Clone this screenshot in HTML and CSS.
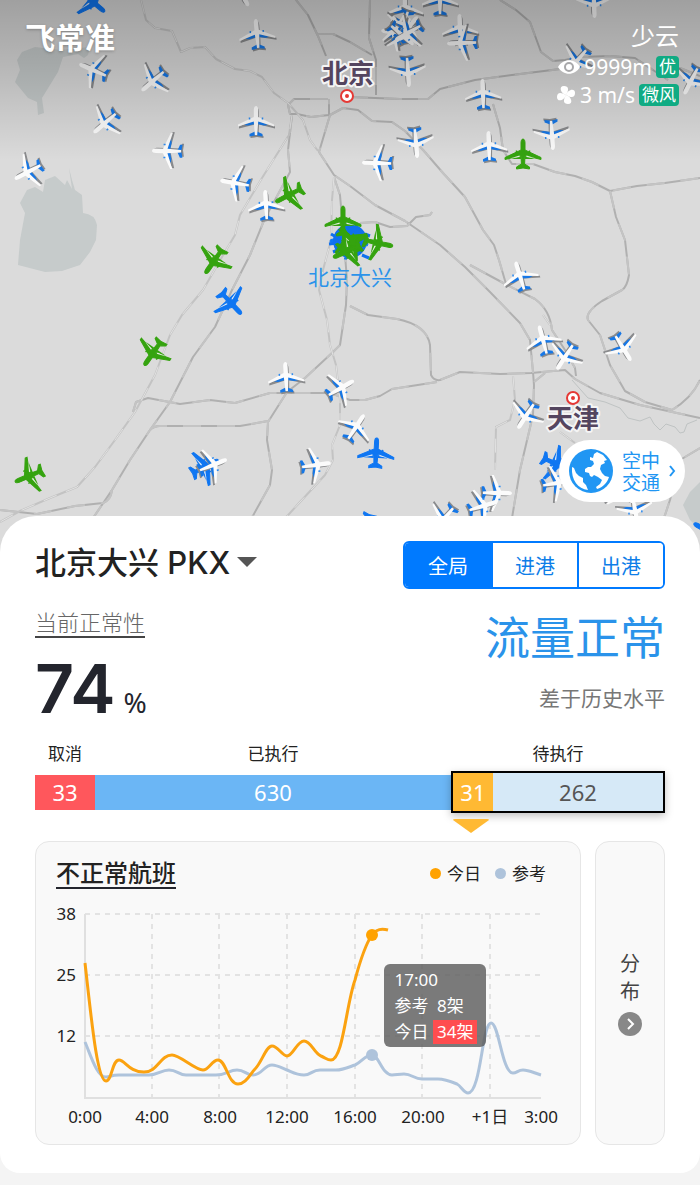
FILE: index.html
```
<!DOCTYPE html>
<html lang="zh-CN">
<head>
    <meta charset="UTF-8">
    <meta name="viewport" content="width=device-width, initial-scale=1.0">
    <title>飞常准 - 北京大兴 PKX</title>
    <link rel="stylesheet" href="styles.css">
</head>
<body>
    <!-- Map -->
    <section class="map">
        <svg class="map-canvas" viewBox="0 0 700 552" preserveAspectRatio="xMidYMin slice" role="img" aria-label="航班地图">
            <defs>
                <linearGradient id="shade" x1="0" y1="0" x2="0" y2="1">
                    <stop offset="0" stop-color="#000" stop-opacity="0.27"/>
                    <stop offset="0.4" stop-color="#000" stop-opacity="0.17"/>
                    <stop offset="1" stop-color="#000" stop-opacity="0"/>
                </linearGradient>
                <!-- All planes point north, 28 long and 36 wide -->
                <path id="body" d="M0 -15C1.4 -15 2 -13 2 -11V-4L18 3.500V5.500L2 1.500L1.600 10L6.500 13V15L0 14L-6.500 15V13L-1.600 10L-2 1.500L-18 5.500V3.500L-2 -4V-11C-2 -13 -1.400 -15 0 -15Z"/>
                <g id="jet">
                    <use href="#body" x="1" y="2" fill="#8a8b8d"/>
                    <path d="M1 -1L12 4L8 4.500L1 3ZM-1 -1L-12 4L-8 4.500L-1 3ZM1 10.500L6.500 13V15.500L1 14.500ZM-1 10.500L-6.500 13V15.500L-1 14.500Z" fill="#1677e6"/>
                    <path d="M0 -15C1.4 -15 2.2 -13 2.2 -11V-4L18 3.500V5.500L2.200 0.500L1.200 14H-1.200L-2.200 0.500L-18 5.500V3.500L-2.200 -4V-11C-2.200 -13 -1.400 -15 0 -15Z" fill="#fbfbfb"/>
                    <path d="M6.500 -3.500V-1.500M-6.500 -3.500V-1.500" stroke="#2d8bf0" stroke-width="1.500"/>
                </g>
                <g id="jet-green">
                    <use href="#body" fill="#35a30f" stroke="#35a30f"/>
                    <path d="M2 2L12 5L2 5ZM-2 2L-12 5L-2 5Z" fill="#35a30f"/>
                    <path d="M3.500 1.500L12 4.300L3.500 3ZM-3.500 1.500L-12 4.300L-3.500 3Z" fill="#e6f2e0"/>
                    <path d="M6.500 -3.500V-1M-6.500 -3.500V-1" stroke="#35a30f" stroke-width="1.500"/>
                </g>
                <g id="jet-blue">
                    <use href="#body" fill="#0f76f2" stroke="#0f76f2"/>
                    <path d="M2 2L12 5L2 5ZM-2 2L-12 5L-2 5Z" fill="#0f76f2"/>
                    <path d="M3.500 1.500L12 4.300L3.500 3ZM-3.500 1.500L-12 4.300L-3.500 3Z" fill="#dfebf8"/>
                    <path d="M6.500 -3.500V-1M-6.500 -3.500V-1" stroke="#0f76f2" stroke-width="1.500"/>
                </g>
                <g id="roads" fill="none" stroke-linejoin="round">
                    <path d="M296 0L308 15L318 36L326 56M318 34H333L350 42L372 55M370 0L369 38L376 60V95"/>
                    <path d="M328 99H294L288 105L290 114H297L311 117L329 115V99"/>
                    <path d="M330 115L343 108L358 110L372 121L392 122L405 131L424 151L443 173L465 197L483 230L494 245L499 260L506 284"/>
                    <path d="M350 97L400 99H428L440 89L475 80L520 74L560 69M500 0L516 10L530 22L541 52L553 61L565 60L580 57L610 56L635 58L668 80M680 68L700 76"/>
                    <path d="M493 104L500 128L503 150L512 164H533L555 172L575 176L592 182L610 191L637 186L665 183L700 178"/>
                    <path d="M610 191L616 217L625 240L629 275Q627 287 622 290L602 301Q585 312 588 320L600 335L610 365L625 391L645 402L672 410Q692 398 700 380"/>
                    <path d="M330 115L319 152L334 175L350 186L375 205L405 221L440 245L465 267L490 292L520 323L530 340L533 372L534 385L533 415L520 470L510 530"/>
                    <path d="M334 177L340 195L343 230L347 280L346 305L340 345L333 352L305 378L287 392L268 422L267 440L272 470L270 485L245 530"/>
                    <path d="M350 306L368 315L397 319Q427 325 430 345L431 375Q434 381 440 380L460 372L500 374L531 373L565 370L575 379L600 393L640 405L700 418"/>
                    <path d="M133 412L136 402L148 398L180 404L210 400L235 403L270 393H330L350 400H365L380 396L392 389L437 382"/>
                    <path d="M292 115L288 150L290 172L275 200L265 218L250 255L232 290L215 327L193 357L170 402L150 430L130 460L112 490L85 530"/>
                    <path d="M150 430Q154 426 160 426H240L268 421M0 510L37 514L75 506L103 503Q111 500 112 490"/>
                    <path d="M360 223L375 222L390 227L407 226L416 217L430 215L432 212M470 265L507 285L535 299Q550 310 552 330L565 350L575 368L576 376M534 382L545 373"/>
                    <path d="M700 448L680 460L670 500L660 530"/>
                </g>
                <g id="rails" fill="none" stroke-linejoin="round">
                    <path d="M141 0L146 20L155 28L172 31L181 52L190 48L205 47L216 59L235 69L250 71L262 77L274 93L288 103L303 120L310 140L318 151"/>
                    <path d="M292 115L289 135L262 178L240 215L235 235L222 257L203 290L182 315L170 335L155 375L135 412L115 440L95 467L77 487L50 498L20 511L0 522"/>
                    <path d="M334 177L332 200L331 240L323 270L319 290L327 320L330 345L336 365L340 400V425L332 445L333 460L325 475L300 502L280 524"/>
                    <path d="M513 376L515 400L510 420L496 427L495 470M543 315L550 325M560 432L575 443"/>
                </g>
            </defs>

            <rect width="700" height="552" fill="#dbdbdb"/>
            <g class="water">
                <path d="M22 52L35 47L60 50L90 47L88 55L84 58L78 54L63 57L58 72L50 85L42 98L44 113L38 115L37 102L28 98L15 82L20 70L17 60Z"/>
                <path d="M45 180L55 176L65 185L67 180L72 189L69 168L72 180L75 190L82 195L83 213Q95 214 97 225L96 240L90 252L80 265L62 271L45 272L18 265L20 240L25 213L20 203L27 190L35 187L43 192Z"/>
                <path d="M700 482L690 492L683 505L690 520L700 530Z"/>
            </g>
            <use href="#roads" class="road"/>
            <use href="#roads" class="road-dash"/>
            <use href="#rails" class="rail"/>
            <use href="#rails" class="rail-dash"/>
            <path class="coast" d="M572 380L588 398L605 402L620 408L628 418L640 421L650 417L654 424L660 430L666 424L675 427L680 433L684 432L687 424L697 420"/>

            <!-- Planes near Beijing -->
            <use href="#jet-blue" transform="translate(93 2) rotate(130)"/>
            <use href="#jet" transform="translate(241 -7) rotate(150)"/>
            <use href="#jet" transform="translate(257 34) rotate(-5)"/>
            <use href="#jet" transform="translate(93 70) rotate(-66)"/>
            <use href="#jet" transform="translate(153 81) rotate(-131)"/>
            <use href="#jet" transform="translate(105 123) rotate(-131)"/>
            <use href="#jet" transform="translate(28 172) rotate(-118)"/>
            <use href="#jet" transform="translate(167 151) rotate(-89)"/>
            <use href="#jet" transform="translate(256 121)"/>
            <use href="#jet" transform="translate(235 183) rotate(-80)"/>
            <use href="#jet" transform="translate(266 205) rotate(-3)"/>
            <use href="#jet" transform="translate(405 9)"/>
            <use href="#jet" transform="translate(403 25) rotate(200)"/>
            <use href="#jet" transform="translate(398 30) rotate(-20)"/>
            <use href="#jet" transform="translate(396 33) rotate(-80)"/>
            <use href="#jet" transform="translate(408 28) rotate(40)"/>
            <use href="#jet" transform="translate(402 35) rotate(130)"/>
            <use href="#jet" transform="translate(408 33) rotate(-120)"/>
            <use href="#jet" transform="translate(440 0)"/>
            <use href="#jet" transform="translate(460 29) rotate(-2)"/>
            <use href="#jet" transform="translate(462 43) rotate(-92)"/>
            <use href="#jet" transform="translate(408 72) rotate(176)"/>
            <use href="#jet" transform="translate(483 94) rotate(-2)"/>
            <use href="#jet" transform="translate(416 143) rotate(175)"/>
            <use href="#jet" transform="translate(377 163) rotate(-88)"/>
            <use href="#jet" transform="translate(489 146) rotate(-2)"/>
            <use href="#jet" transform="translate(552 135) rotate(176)"/>
            <use href="#jet" transform="translate(594 3) rotate(178)"/>
            <use href="#jet" transform="translate(577 61) rotate(-140)"/>
            <use href="#jet" transform="translate(691 81) rotate(-153)"/>
            <use href="#jet-green" transform="translate(523 154)"/>
            <use href="#jet-green" transform="translate(289 195) rotate(-118)"/>
            <use href="#jet-green" transform="translate(214 261) rotate(-145)"/>

            <!-- Planes parked at Daxing -->
            <use href="#jet-blue" transform="translate(345 240) rotate(-95)"/>
            <use href="#jet-blue" transform="translate(353 242) rotate(100)"/>
            <circle cx="350" cy="241" r="17" fill="#0f70ee"/>
            <path d="M331 234L338 238M329 244L338 243M333 252L340 249M362 255L369 258M365 234L370 236" stroke="#0f70ee" stroke-width="3"/>
            <use href="#jet-green" transform="translate(343 221)"/>
            <use href="#jet-green" transform="translate(349 240) rotate(-30)"/>
            <use href="#jet-green" transform="translate(352 243) rotate(62)"/>
            <use href="#jet-green" transform="translate(378 243) rotate(102)"/>
            <use href="#jet-green" transform="translate(347 251) rotate(-115)"/>

            <!-- Planes to the south -->
            <use href="#jet-blue" transform="translate(231 303) rotate(137)"/>
            <use href="#jet-green" transform="translate(153 353) rotate(-145)"/>
            <use href="#jet-green" transform="translate(29 476) rotate(-113)"/>
            <use href="#jet" transform="translate(520 276) rotate(-17)"/>
            <use href="#jet" transform="translate(543 340) rotate(-15)"/>
            <use href="#jet" transform="translate(565 357) rotate(-147)"/>
            <use href="#jet" transform="translate(623 348) rotate(148)"/>
            <use href="#jet" transform="translate(286 377) rotate(-3)"/>
            <use href="#jet" transform="translate(341 388) rotate(60)"/>
            <use href="#jet" transform="translate(356 427) rotate(33)"/>
            <use href="#jet" transform="translate(526 416) rotate(-147)"/>
            <use href="#jet-blue" transform="translate(376 453) rotate(3)"/>
            <use href="#jet-blue" transform="translate(205 467) rotate(63)"/>
            <use href="#jet" transform="translate(213 465) rotate(68)"/>
            <use href="#jet" transform="translate(316 465) rotate(82)"/>
            <use href="#jet" transform="translate(497 493) rotate(91)"/>
            <use href="#jet" transform="translate(483 506) rotate(73)"/>
            <use href="#jet" transform="translate(444 519) rotate(-140)"/>
            <use href="#jet-blue" transform="translate(556 464) rotate(115)"/>
            <use href="#jet" transform="translate(557 483) rotate(80)"/>
            <use href="#jet" transform="translate(635 510) rotate(170)"/>
            <use href="#jet" transform="translate(622 493) rotate(130)"/>
            <use href="#jet-blue" transform="translate(365 528) rotate(200)"/>
            <use href="#jet-blue" transform="translate(707 531) rotate(-60)"/>

            <rect width="700" height="160" fill="url(#shade)"/>

            <g class="pin">
                <circle cx="347" cy="96" r="6"/>
                <circle cx="347" cy="96" r="1"/>
                <circle cx="573" cy="398" r="6"/>
                <circle cx="573" cy="398" r="1"/>
            </g>
            <text class="city" x="348" y="83">北京</text>
            <text class="city" x="573" y="428">天津</text>
            <text class="airport" x="350" y="285">北京大兴</text>
        </svg>

        <header class="map-head">
            <h1 class="logo">飞常准</h1>
            <div class="weather">
                <div class="weather-sky">少云</div>
                <div class="weather-row">
                    <svg width="22" height="18" viewBox="0 0 22 18" aria-hidden="true">
                        <path d="M0 9C5 0 17 0 22 9C17 18 5 18 0 9Z" fill="#fff"/>
                        <circle cx="11" cy="9" r="4" fill="#fff" stroke="#a8a8aa" stroke-width="2"/>
                    </svg>
                    <span class="weather-value">9999m</span>
                    <span class="badge">优</span>
                </div>
                <div class="weather-row">
                    <svg width="20" height="20" viewBox="-10 -10 20 20" fill="#fff" aria-hidden="true">
                        <path id="blade" d="M0 0C-5 -1 -8 -9 -2 -9C3 -9 3 -5 0 0Z"/>
                        <use href="#blade" transform="rotate(90)"/>
                        <use href="#blade" transform="rotate(180)"/>
                        <use href="#blade" transform="rotate(270)"/>
                    </svg>
                    <span class="weather-value">3 m/s</span>
                    <span class="badge">微风</span>
                </div>
            </div>
        </header>

        <a class="traffic" href="#">
            <svg width="46" height="46" viewBox="0 0 46 46" aria-hidden="true">
                <circle cx="23" cy="23" r="22" fill="#2196f3"/>
                <g fill="#fff">
                    <path d="M4 19L6 20L8 25L11 28L15 30L15 34L18 37L20 42C10 41 3 32 4 19Z"/>
                    <path d="M22 9L25 10L26 6L29 4L35 7L39 12L36 13L37 15L33 17L32 21L34 25L37 28L41 29C39 35 35 39 29 41L28 39L32 36L34 32L30 29L26 27L24 29L22 28L21 25L17 24L17 21L20 19L23 19L26 16L25 13L22 12Z"/>
                </g>
            </svg>
            <span class="traffic-text">空中<br>交通</span>
            <svg width="8" height="12" viewBox="0 0 8 12" fill="none" stroke="#2196f3" stroke-width="2" aria-hidden="true">
                <path d="M2 1L6 6L2 11"/>
            </svg>
        </a>
    </section>

    <!-- Airport panel -->
    <main class="panel">
        <div class="panel-top">
            <div class="airport-select">
                <select aria-label="机场">
                    <option>北京大兴 PKX</option>
                </select>
                <svg width="20" height="10" viewBox="0 0 20 10" aria-hidden="true"><path d="M0 0H20L10 10Z" fill="#555"/></svg>
            </div>
            <div class="tabs">
                <button class="tab active" type="button">全局</button>
                <button class="tab" type="button">进港</button>
                <button class="tab" type="button">出港</button>
            </div>
        </div>

        <div class="status">
            <div class="status-left">
                <a class="status-link" href="#">当前正常性</a>
                <div class="rate">74<span class="rate-unit">%</span></div>
            </div>
            <div class="status-right">
                <div class="flow">流量正常</div>
                <div class="compare">差于历史水平</div>
            </div>
        </div>

        <div class="progress">
            <div class="progress-label">取消</div>
            <div class="progress-label">已执行</div>
            <div class="progress-label">待执行</div>
            <div class="bar bar-cancel">33</div>
            <div class="bar bar-done">630</div>
            <div class="bar-wait">
                <div class="bar-delay">31</div>
                <div class="bar-plan">262</div>
            </div>
            <svg class="marker" width="36" height="14" viewBox="0 0 36 14" aria-hidden="true"><path d="M0 1Q0 0 2 0H34Q36 0 36 1L18 14Z" fill="#ffb933"/></svg>
        </div>

        <div class="cards">
            <section class="card chart-card">
                <div class="card-head">
                    <h2 class="card-title">不正常航班</h2>
                    <div class="legend">
                        <span class="legend-item today">今日</span>
                        <span class="legend-item ref">参考</span>
                    </div>
                </div>
                <div class="chart">
                    <svg class="chart-canvas" viewBox="0 0 504 230" role="img" aria-label="不正常航班走势">
                        <path class="grid" d="M29 14H485M29 75H485M29 136H485M96 14V198M163 14V198M231 14V198M299 14V198M366 14V198M434 14V198"/>
                        <path class="axis" d="M29 14V198H485"/>
                        <path class="line line-ref" d="M29 142C35 156 41 177 50 177C54 177 55 175 63 175H93C102 175 105 170 113 170S123 175 130 175H160C170 175 173 170 181 170S190 175 197 175C206 175 208 165 216 165C221 165 226 168 231 170S241 175 248 175S256 170 264 170H280C287 170 293 167 299 165C306 162 309 155 316 155C323 155 326 175 336 175C340 175 343 174 348 174C356 174 358 179 366 179H382C388 179 396 182 401 184C405 186 408 193 412 193C425 193 426 123 435 123C443 123 446 173 457 173C461 173 462 170 467 170C473 170 478 173 485 175"/>
                        <path class="line line-today" d="M29 63C35 115 41 181 50 181C56 181 56 160 63 160C69 160 73 172 88 172C102 172 104 155 116 155C124 155 139 170 147 170C153 170 156 160 162 160C170 160 172 184 182 184C190 184 194 174 199 169C206 162 210 146 216 146C222 146 226 156 231 156C237 156 241 141 248 141C255 141 258 153 265 156C270 158 271 160 275 160C287 160 290 105 299 80C303 65 309 45 316 35C320 29 325 28 332 30"/>
                        <circle cx="316" cy="155" r="6" fill="#aec3db"/>
                        <circle cx="316" cy="35" r="6" fill="#ffa200"/>
                        <g class="y-labels">
                            <text x="20" y="20">38</text>
                            <text x="20" y="81">25</text>
                            <text x="20" y="142">12</text>
                        </g>
                        <g class="x-labels">
                            <text x="29" y="223">0:00</text>
                            <text x="96" y="223">4:00</text>
                            <text x="164" y="223">8:00</text>
                            <text x="231" y="223">12:00</text>
                            <text x="299" y="223">16:00</text>
                            <text x="367" y="223">20:00</text>
                            <text x="434" y="223">+1日</text>
                            <text x="485" y="223">3:00</text>
                        </g>
                    </svg>
                    <div class="tooltip">
                        <div>17:00</div>
                        <div>参考 <span class="tooltip-value">8架</span></div>
                        <div>今日 <span class="tooltip-value alert">34架</span></div>
                    </div>
                </div>
            </section>
            <button class="card spread" type="button">
                <span>分</span>
                <span>布</span>
                <svg width="24" height="24" viewBox="0 0 24 24" aria-hidden="true">
                    <circle cx="12" cy="12" r="12" fill="#888"/>
                    <path d="M10 7L15 12L10 17" fill="none" stroke="#fff" stroke-width="2"/>
                </svg>
            </button>
        </div>
    </main>
</body>
</html>
```
FILE: styles.css
```
* {
    box-sizing: border-box;
}

body {
    margin: 0;
    background-color: #f4f4f4;
    color: #222;
    font-family: "Noto Sans", "Noto Sans CJK SC", sans-serif;
}

button, select {
    font-family: inherit;
}

/* Map */
.map {
    position: relative;
    aspect-ratio: 700 / 552;
    overflow: hidden;
}

.map-canvas {
    display: block;
    width: 100%;
    height: 100%;
}

.water {
    fill: #c6cbcb;
}

.road {
    stroke: #b0b0b0;
    stroke-width: 2;
}

.road-dash {
    stroke: #c4c4c4;
    stroke-width: 2;
    stroke-dasharray: 18 16;
}

.rail {
    stroke: #c3c3c3;
    stroke-width: 2;
}

.rail-dash {
    stroke: #e2e2e2;
    stroke-width: 1;
    stroke-dasharray: 14 10;
}

.coast {
    fill: none;
    stroke: #bfc3c3;
}

.pin circle {
    fill: #e53935;
    stroke: #e53935;
    stroke-width: 2;
}

.pin circle:nth-child(odd) {
    fill: #fff;
}

.city, .airport {
    text-anchor: middle;
}

.city {
    font-size: 26px;
    font-weight: 700;
    fill: #54455f;
    stroke: #f4f4f4;
    stroke-width: 4;
    stroke-linejoin: round;
    paint-order: stroke;
}

.airport {
    font-size: 21px;
    fill: #2b93ea;
}

.map-head {
    position: absolute;
    top: 0;
    left: 0;
    right: 0;
    display: flex;
    justify-content: space-between;
    padding: 19px 21px 0 25px;
    color: white;
}

.logo {
    margin: 0;
    font-size: 30px;
    line-height: 38px;
    font-weight: 700;
    text-shadow: 0 1px 3px rgba(0, 0, 0, 0.25);
}

.weather {
    display: flex;
    flex-direction: column;
    align-items: flex-end;
}

.weather-sky {
    font-size: 24px;
    line-height: 34px;
}

.weather-row {
    display: flex;
    align-items: center;
    gap: 4px;
    height: 28px;
}

.weather-value {
    font-size: 21px;
    line-height: 26px;
}

.badge {
    padding: 0 3px;
    border-radius: 4px;
    background-color: #10ab83;
    font-size: 17px;
    line-height: 22px;
}

.traffic {
    position: absolute;
    right: 15px;
    bottom: 50px;
    display: flex;
    align-items: center;
    gap: 8px;
    padding: 8px 9px;
    border-radius: 32px;
    background-color: white;
    color: #2196f3;
    text-decoration: none;
}

.traffic-text {
    font-family: "Noto Sans CJK SC", sans-serif;
    font-size: 19px;
    line-height: 22px;
}

/* Panel */
.panel {
    position: relative;
    margin: -36px 0 12px;
    padding: 25px 35px 28px;
    border-radius: 36px 36px 20px 20px;
    background-color: white;
}

.panel-top, .status, .card-head {
    display: flex;
    justify-content: space-between;
}

.airport-select {
    display: flex;
    align-items: center;
    gap: 6px;
    height: 42px;
}

.airport-select select {
    appearance: none;
    border: none;
    padding: 0;
    background: none;
    color: #222;
    font-family: Inter, "Noto Sans CJK SC", sans-serif;
    font-size: 31px;
    font-weight: 500;
}

.tabs {
    display: flex;
    border: 2px solid #007aff;
    border-radius: 6px;
    overflow: hidden;
}

.tab {
    width: 86px;
    height: 44px;
    padding: 0;
    border: none;
    background-color: white;
    color: #0d7de8;
    font-size: 20px;
    cursor: pointer;
}

.tab + .tab {
    border-left: 2px solid #007aff;
}

.tab.active {
    background-color: #007aff;
    color: white;
}

.status {
    margin-top: 20px;
}

.status-left {
    display: flex;
    flex-direction: column;
    align-items: flex-start;
}

.status-link {
    border-bottom: 2px solid #444;
    color: #666;
    font-size: 22px;
    font-weight: 300;
    line-height: 27px;
    text-decoration: none;
}

.rate {
    display: flex;
    align-items: baseline;
    gap: 8px;
    margin-top: 20px;
    color: #23252d;
    font-family: Inter, sans-serif;
    font-size: 68px;
    font-weight: 600;
    line-height: 60px;
}

.rate-unit {
    font-family: "Noto Sans", sans-serif;
    font-size: 28px;
    font-weight: 400;
    line-height: 28px;
}

.status-right {
    text-align: right;
}

.flow {
    color: #2a93ea;
    font-size: 45px;
    line-height: 58px;
}

.compare {
    margin-top: 17px;
    color: #777;
    font-size: 21px;
    line-height: 28px;
}

/* Flight progress */
.progress {
    display: grid;
    grid-template-columns: 60fr 356fr 214fr;
    align-items: center;
    margin-top: 24px;
    text-align: center;
}

.progress-label {
    margin-bottom: 5px;
    font-size: 17px;
    line-height: 24px;
}

.bar, .bar-wait {
    font-size: 22px;
    line-height: 35px;
}

.bar {
    color: white;
}

.bar-cancel {
    background-color: #ff575c;
}

.bar-done {
    background-color: #6bb6f5;
}

.bar-wait {
    display: flex;
    border: 2px solid black;
    line-height: 38px;
    box-shadow: 0 3px 8px rgba(0, 0, 0, 0.25);
}

.bar-delay {
    width: 19%;
    background-color: #ffb933;
    color: white;
}

.bar-plan {
    flex: 1;
    background-color: #d6e9f7;
    color: #555;
}

.marker {
    grid-column: 3;
    margin: 6px 0 0 2px;
}

/* Cards */
.cards {
    display: flex;
    gap: 14px;
    margin-top: 8px;
}

.card {
    border: 1px solid #e6e6e6;
    border-radius: 14px;
    background-color: #f9f9f9;
}

.chart-card {
    flex: 1;
    padding: 16px 20px 14px;
}

.card-head {
    align-items: center;
}

.card-title {
    margin: 0;
    border-bottom: 2px solid #23252d;
    font-size: 24px;
    font-weight: 500;
    line-height: 29px;
}

.legend {
    display: flex;
    gap: 14px;
    padding-right: 14px;
    font-size: 17px;
    line-height: 24px;
}

.legend-item {
    display: flex;
    align-items: center;
    gap: 6px;
}

.legend-item::before {
    content: "";
    width: 11px;
    height: 11px;
    border-radius: 50%;
}

.today::before {
    background-color: #ffa200;
}

.ref::before {
    background-color: #aec3db;
}

.chart {
    position: relative;
    margin-top: 11px;
}

.chart-canvas {
    display: block;
    width: 100%;
    font-size: 17px;
    fill: #222;
}

.grid {
    fill: none;
    stroke: #e3e3e3;
    stroke-width: 2;
    stroke-dasharray: 5 5;
}

.axis {
    fill: none;
    stroke: #e0e0e0;
    stroke-width: 2;
}

.line {
    fill: none;
    stroke-width: 3;
}

.line-ref {
    stroke: #aec3db;
}

.line-today {
    stroke: #fba210;
}

.x-labels {
    text-anchor: middle;
}

.y-labels {
    text-anchor: end;
}

.tooltip {
    position: absolute;
    left: 65%;
    top: 28%;
    padding: 3px 9px 2px 11px;
    border-radius: 6px;
    background-color: rgba(90, 90, 90, 0.8);
    color: white;
    font-size: 17px;
    line-height: 26px;
}

.tooltip-value {
    display: inline-block;
    padding: 0 4px;
    line-height: 24px;
}

.alert {
    background-color: #ff4d4f;
}

.spread {
    display: flex;
    flex-direction: column;
    align-items: center;
    justify-content: center;
    width: 70px;
    padding: 0;
    color: #444;
    font-size: 20px;
    line-height: 28px;
    cursor: pointer;
}

.spread svg {
    margin-top: 6px;
}
```
